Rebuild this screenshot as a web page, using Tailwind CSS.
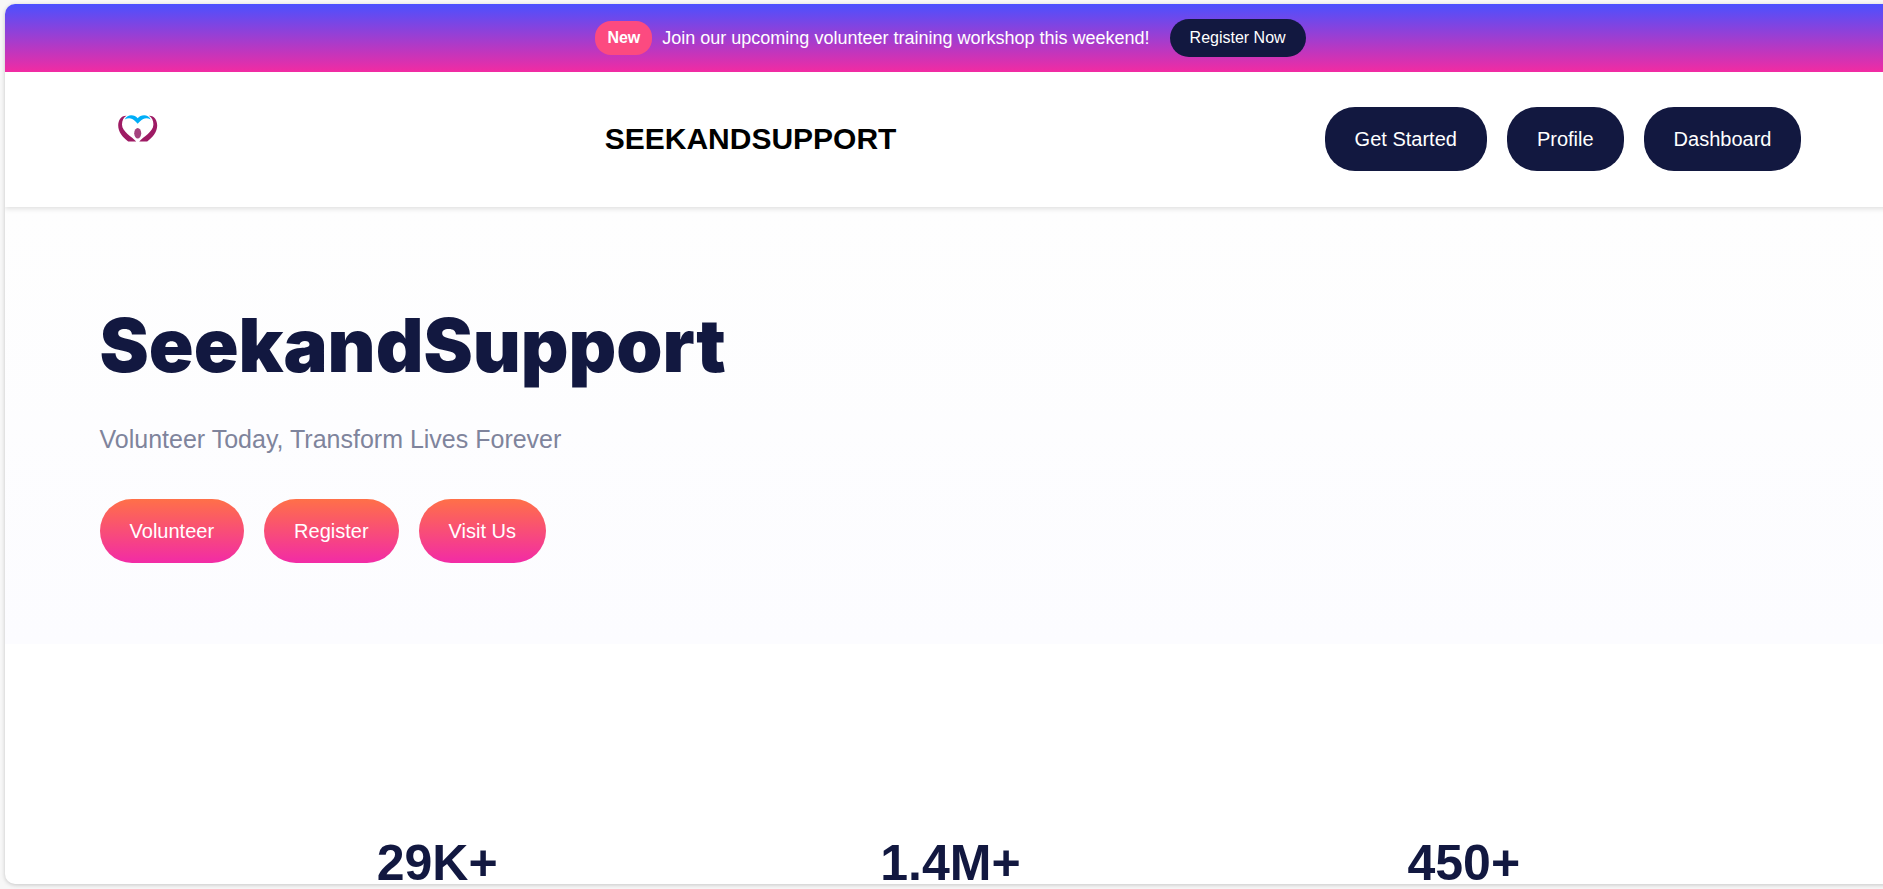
<!DOCTYPE html>
<html lang="en">
<head>
<meta charset="utf-8">
<title>SeekandSupport</title>
<script src="https://cdn.jsdelivr.net/npm/@tailwindcss/browser@4"></script>
</head>
<body class="h-screen overflow-hidden bg-[#f7f7f7] pt-1 pb-[5px] pl-[5px] font-['Liberation_Sans',Arial,sans-serif]">
<div class="-mr-[13px] h-full overflow-hidden rounded-[10px] bg-white shadow-[0_1px_4px_rgba(0,0,0,0.2)]">
  <div class="relative z-10 flex h-[68px] items-center justify-center bg-linear-to-b/srgb from-[#4b50ff] to-[#f22ba2] text-white">
    <span class="rounded-2xl bg-[#fc4a80] px-3 py-2 text-base leading-[18px] font-bold">New</span>
    <p class="ml-[10px] text-lg leading-5">Join our upcoming volunteer training workshop this weekend!</p>
    <button type="button" class="ml-5 rounded-[20px] bg-[#121840] px-5 py-[10px] text-base leading-[18px]">Register Now</button>
  </div>

  <header class="relative flex items-center justify-between bg-white px-[5%] pt-[30px] pb-[31px] shadow-[0_2px_5px_rgba(0,0,0,0.12)]">
    <a href="#" aria-label="SeekandSupport home">
      <svg class="block h-[74px] w-[77px]" viewBox="0 0 77 74" aria-hidden="true">
        <path d="M26.500 13.800C21 13.500 18.200 18.500 18.200 23.500c0 6.500 4.300 11.500 10 16h8C32 34.500 22 30 22 22.500c0-3.800 1.500-7 4.500-8.700Z" fill="#9e1b64"/>
        <path d="M48.900 13.800c5.500-.3 8.300 4.700 8.300 9.700 0 6.500-4.300 11.500-10 16h-8c4.200-5 14.200-9.500 14.200-17 0-3.800-1.500-7-4.500-8.700Z" fill="#9e1b64"/>
        <path d="M24.700 17.500c1.500-3 4-4.200 6.500-4.200 2.700 0 5 1.200 6.500 3 1.500-1.800 3.800-3 6.500-3 2.500 0 5 1.200 6.500 4.200-2.500-1.500-5.200-1.800-7.500-.6-2.300 1.200-4 2.900-5.500 4.900-1.500-2-3.200-3.700-5.500-4.900-2.300-1.200-5-.9-7.500.6Z" fill="#00aef8"/>
        <ellipse cx="37.700" cy="31.300" rx="3.500" ry="5.200" fill="#a5437e"/>
      </svg>
    </a>
    <p class="text-[30px] leading-9 font-bold text-black">SEEKANDSUPPORT</p>
    <nav class="flex gap-5 text-xl leading-6 text-white">
      <button type="button" class="rounded-[30px] bg-[#121840] px-[30px] py-5">Get Started</button>
      <button type="button" class="rounded-[30px] bg-[#121840] px-[30px] py-5">Profile</button>
      <button type="button" class="rounded-[30px] bg-[#121840] px-[30px] py-5">Dashboard</button>
    </nav>
  </header>

  <section class="bg-linear-to-b/srgb from-[#fefefe] to-[#fcfcff] px-[5%] pt-[88px] pb-[81px]">
    <h1 class="font-['Arial_Black','Inter',sans-serif] text-[74px] leading-[100px] font-black text-[#121840]">SeekandSupport</h1>
    <p class="mt-[29px] text-[25px] leading-[30px] text-[#7f849c]">Volunteer Today, Transform Lives Forever</p>
    <div class="mt-[45px] flex gap-5 text-xl leading-6 text-white">
      <button type="button" class="rounded-[32px] bg-linear-to-b/srgb from-[#ff7048] to-[#f22ba6] px-[30px] py-5">Volunteer</button>
      <button type="button" class="rounded-[32px] bg-linear-to-b/srgb from-[#ff7048] to-[#f22ba6] px-[30px] py-5">Register</button>
      <button type="button" class="rounded-[32px] bg-linear-to-b/srgb from-[#ff7048] to-[#f22ba6] px-[30px] py-5">Visit Us</button>
    </div>
  </section>

  <section class="mx-auto grid max-w-[1540px] grid-cols-3 pt-[190px] text-center text-[50px] leading-[58px] font-bold text-[#121840]">
    <p>29K+</p>
    <p>1.4M+</p>
    <p>450+</p>
  </section>
</div>
</body>
</html>
